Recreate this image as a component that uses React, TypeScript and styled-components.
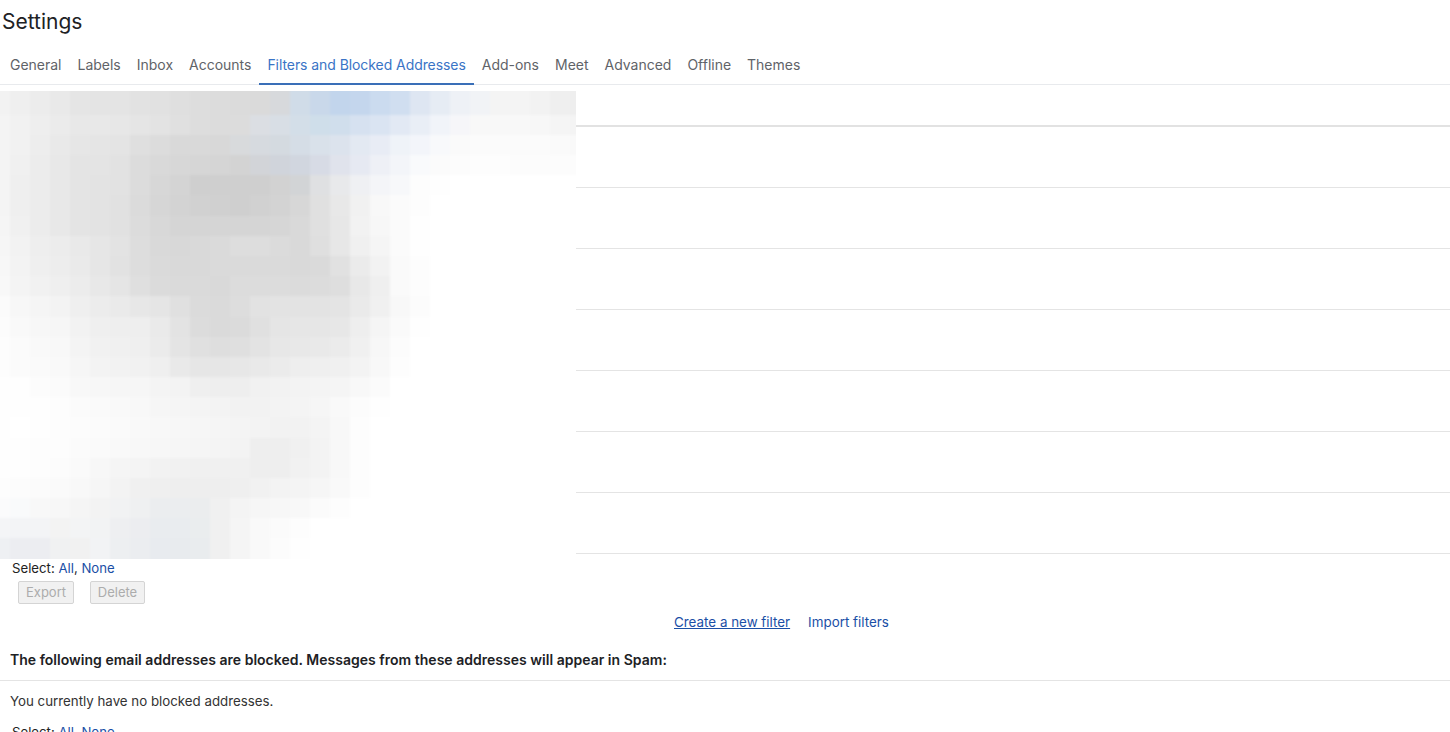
import React from "react";
import styled, { createGlobalStyle } from "styled-components";

const Global = createGlobalStyle`
  html, body { margin: 0; padding: 0; background: #fff; height: 732px; overflow: hidden; }
  body { font-family: Inter, "Liberation Sans", sans-serif; font-size: 14px; color: #222; }
`;

const Page = styled.div`
  width: 1450px;
  height: 732px;
  overflow: hidden;
`;
const Title = styled.h1`
  margin: 0;
  height: 45px;
  line-height: 44px;
  padding-left: 2px;
  font-size: 21px;
  font-weight: 400;
  color: #202124;
`;
const TabBar = styled.nav`
  display: flex;
  height: 40px;
  box-sizing: border-box;
  padding-left: 2px;
  border-bottom: 1px solid #e8eaed;
`;
const Tab = styled.a<{ $active?: boolean }>`
  height: 40px;
  box-sizing: border-box;
  padding: 0 8px;
  line-height: 40px;
  font-size: 14px;
  letter-spacing: ${(p) => (p.$active ? "-0.07px" : "-0.01px")};
  white-space: nowrap;
  color: ${(p) => (p.$active ? "#3a74c6" : "#5f6368")};
  border-bottom: 2px solid ${(p) => (p.$active ? "#3a6fb8" : "transparent")};
`;
const FilterArea = styled.section`
  display: flex;
  height: 468px;
  margin-top: 6px;
`;
const Mosaic = styled.svg`
  display: block;
  flex: 0 0 576px;
  width: 576px;
  height: 468px;
`;
const FilterLines = styled.div`
  flex: 1;
  display: flex;
  flex-direction: column;
`;
const FilterHead = styled.div`
  height: 34px;
  border-bottom: 2px solid #e2e2e2;
`;
const FilterRow = styled.div`
  height: 60px;
  border-bottom: 1px solid #e4e4e4;
`;
const SelectLine = styled.div`
  height: 18px;
  line-height: 18px;
  padding-left: 12px;
  font-size: 13.2px;
  color: #222;
`;
const Link = styled.a`
  color: #1b4fa6;
`;
const ButtonRow = styled.div`
  display: flex;
  gap: 16px;
  margin: 4px 0 0 18px;
`;
const DisabledButton = styled.button<{ $width: number }>`
  width: ${(p) => p.$width}px;
  height: 23px;
  box-sizing: border-box;
  padding: 0 0 2px;
  background: #f1f1f1;
  border: 1px solid #d4d4d4;
  border-radius: 2px;
  font: 400 13px Inter, "Liberation Sans", sans-serif;
  color: #acacac;
`;
const ActionRow = styled.div`
  display: flex;
  gap: 18px;
  height: 18px;
  line-height: 18px;
  margin-top: 9px;
  padding-left: 674px;
  font-size: 13.4px;
`;
const UnderLink = styled(Link)`
  text-decoration: underline;
`;
const BlockedHeading = styled.div`
  margin-top: 20px;
  padding: 0 0 11px 10px;
  height: 18px;
  line-height: 18px;
  font-size: 14px;
  font-weight: 600;
  letter-spacing: 0.02px;
  color: #202124;
  border-bottom: 1px solid #e4e4e4;
`;
const BlockedNote = styled.div`
  height: 18px;
  line-height: 18px;
  margin-top: 11px;
  padding-left: 10px;
  font-size: 13.3px;
  color: #333;
`;
const LastSelect = styled(SelectLine)`
  margin-top: 13px;
`;

const tabs = ["General", "Labels", "Inbox", "Accounts", "Filters and Blocked Addresses", "Add-ons", "Meet", "Advanced", "Offline", "Themes"];

const xEdges = [0, ...Array.from({ length: 29 }, (_, i) => 10 + i * 20), 576];
const yEdges = [0, 24, 44, 64, 84, 104, 125, 145, 165, 185, 205, 226, 246, 266, 286, 306, 326, 347, 367, 387, 407, 427, 447, 468];

const cells = [
  "f2 ef ec e9 e5 e4 e4 e2 e1 df dd dc db da d7d9dc d0dce8 c9d8ea c2d5ec c4d6ed cbdbef d0def0 dee6f2 e6ecf4 eef1f6 f1f3f6 f4 f4 f2 ef ee",
  "f4 f1 ee eb e8 e8 e7 e5 e3 e0 dd dc dc dbdee3 d8dee5 d3dee8 cfdeea d0deec d6e1f0 dae4f2 e2e9f4 e9eef6 f1f4f9 f6f6f9 f8 f8 f8 f7 f5 f4",
  "f4 f1 ed e9 e6 e5 e4 df dc d9 d9 d8 d8dadc d6dadf d4dae0 d5dde6 d9e1ea dce3ed e3e9f2 e8ecf5 eff3f8 f3f5fa f8f9fb fa fb fb fb fb fa f9",
  "f4 f0 ec e8 e4 e4 e2 dc d9 d7 d6 d5 d3 d2d4d8 d0d4db d1d6df d7dbe5 e0e3ec e6e9f2 eef0f6 f3f5f9 f9fafc fb fc fd fd fc fc fc fc",
  "f4 ef ec e8 e4 e3 e2 dc d7 d4 cf cf cf cf d2 d2d4d6 dfe0e2 e8e9eb eff0f3 f4f5f8 f7f8fa fd fe",
  "f4 ef ec e8 e4 e3 e1 db d6 d3 d1 d0 cf d1 d3 d7 e0 e8 f1 f8 fb fd",
  "f5 f0 ec e8 e4 e3 e1 dc d8 d5 d5 d5 d5 d5 d6 d9 e0 e7 f2 f7 fb fe",
  "f6 f2 ee ec e9 e6 e3 dd d9 d8 d9 da dd dd db d9 df e7 f0 f5 fb fe",
  "f7 f3 ef ed ea e6 e2 dd da d9 d9 da da da da d9 da e1 eb f2 fa fd",
  "f8 f4 f1 ef ec e8 e5 df db da da d9 dc dc dc db dc de e8 ef fa fd",
  "fb f7 f5 f3 ef ec ea e7 e5 e0 db da dd e2 e3 e3 e3 e4 ea f0 f8 fc",
  "fc f9 f7 f6 f2 ef ee ee ea e3 dc da db e0 e5 e6 e6 e7 ee f5 fa fe",
  "fd fb f9 f8 f4 f1 f0 ef eb e4 e0 de df e3 e7 e8 e9 eb f0 f7 fc",
  "fd fb fa f9 f6 f3 f2 f1 ef e9 e6 e6 e7 e9 eb ee ef f0 f3 f8 fd",
  "fe fe fc fb f8 f7 f6 f6 f4 f3 ef ee ee f1 f2 f3 f4 f5 f8 fb",
  "fe fe fe fd fb fa f9 f8 f6 f5 f4 f3 f2 f2 f3 f4 f6 f9 fc fe",
  "fe ff fe fd fc fb fa f9 f8 f7 f6 f5 f4 f3 f2 f2 f4 f8 fd",
  "fe fe fd fd fb fa f9 f8 f7 f6 f5 f4 f3 ee ee f0 f3 f8 fd",
  "fe fe fd fc fa f7 f5 f4 f2 f1 f0 f0 f0 ee ee f1 f3 f8 fd",
  "fd fc fb fa f8 f6 f3 f0 ef ee ee ee ef f1 f3 f4 f6 f9 fd",
  "fbfbfc f9fafb f8 f7 f5 f3 f1f2f3 eff0f1 ebedef ebedef ebedee f0 f4 f6 f7 f8 fb fd",
  "f4f5f7 f3f4f6 f3f4f6 f3 f3f4f5 f2f3f4 eeeff1 ecedf0 e9ecef e9ecef eaedee f0 f5 f9 fb fd",
  "eef0f3 ecedf1 ecedf1 f0f1f2 f1 f2f3f5 edeff1 ebedf0 e8ebef e8ebee e9ecee f0 f5 f9 fc fe",
];

const toColor = (token: string) => (token.length === 2 ? `#${token}${token}${token}` : `#${token}`);

const BlurredFilters = () => (
  <Mosaic viewBox="0 0 576 468" aria-hidden="true">
    <defs>
      <filter id="soft" filterUnits="userSpaceOnUse" x="-10" y="-10" width="596" height="488" colorInterpolationFilters="sRGB">
        <feGaussianBlur stdDeviation="0.9" />
      </filter>
    </defs>
    <g filter="url(#soft)" shapeRendering="crispEdges">
      <rect x="-10" y="-10" width="596" height="488" fill="#fff" />
      {cells.flatMap((row, r) =>
        row.split(" ").map((token, c) => {
          const left = c === 0 ? -10 : xEdges[c];
          const right = c === 29 ? 586 : xEdges[c + 1];
          const top = r === 0 ? -10 : yEdges[r];
          const bottom = r === 22 ? 478 : yEdges[r + 1];
          return <rect key={`${r}-${c}`} x={left} y={top} width={right - left} height={bottom - top} fill={toColor(token)} />;
        })
      )}
    </g>
  </Mosaic>
);

export default function App() {
  return (
    <Page>
      <Global />
      <Title>Settings</Title>
      <TabBar>
        {tabs.map((t) => (
          <Tab key={t} $active={t.startsWith("Filters")}>{t}</Tab>
        ))}
      </TabBar>
      <FilterArea>
        <BlurredFilters />
        <FilterLines>
          <FilterHead />
          {Array.from({ length: 7 }, (_, i) => (
            <FilterRow key={i} />
          ))}
        </FilterLines>
      </FilterArea>
      <SelectLine>
        Select: <Link>All</Link>, <Link>None</Link>
      </SelectLine>
      <ButtonRow>
        <DisabledButton $width={56}>Export</DisabledButton>
        <DisabledButton $width={55}>Delete</DisabledButton>
      </ButtonRow>
      <ActionRow>
        <UnderLink>Create a new filter</UnderLink>
        <Link>Import filters</Link>
      </ActionRow>
      <BlockedHeading>The following email addresses are blocked. Messages from these addresses will appear in Spam:</BlockedHeading>
      <BlockedNote>You currently have no blocked addresses.</BlockedNote>
      <LastSelect>
        Select: <Link>All</Link>, <Link>None</Link>
      </LastSelect>
    </Page>
  );
}
